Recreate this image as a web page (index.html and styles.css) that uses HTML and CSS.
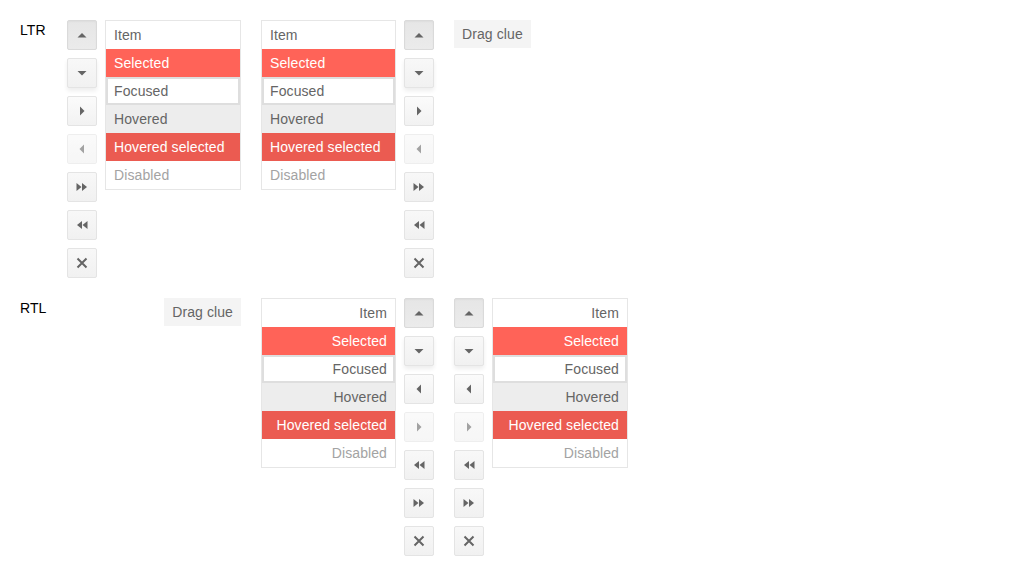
FILE: index.html
```html
<!DOCTYPE html>
<html>
<head>
<meta charset="utf-8">
<link rel="stylesheet" href="styles.css">
</head>
<body>
<div class="demo">
  <div class="label">LTR</div>

  <div class="listbox">
    <div class="toolbar">
      <button class="btn active"><svg viewBox="0 0 16 16" width="16" height="16"><polygon points="3.5,10.5 8,6 12.5,10.5"/></svg></button>
      <button class="btn focus"><svg viewBox="0 0 16 16" width="16" height="16"><polygon points="3.5,6 8,10.5 12.5,6"/></svg></button>
      <button class="btn hover"><svg viewBox="0 0 16 16" width="16" height="16"><polygon points="6,3.5 10.5,8 6,12.5"/></svg></button>
      <button class="btn disabled"><svg viewBox="0 0 16 16" width="16" height="16"><polygon points="10,3.5 5.5,8 10,12.5"/></svg></button>
      <button class="btn"><svg viewBox="0 0 16 16" width="16" height="16"><polygon points="2.5,4 7.5,8 2.5,12"/><polygon points="8,4 13,8 8,12"/></svg></button>
      <button class="btn"><svg viewBox="0 0 16 16" width="16" height="16"><polygon points="13.5,4 8.5,8 13.5,12"/><polygon points="8,4 3,8 8,12"/></svg></button>
      <button class="btn"><svg viewBox="0 0 16 16" width="16" height="16"><path d="M3.5 3.5 L12.5 12.5 M12.5 3.5 L3.5 12.5" class="x"/></svg></button>
    </div>
    <ul class="list">
      <li class="item">Item</li>
      <li class="item selected">Selected</li>
      <li class="item focused">Focused</li>
      <li class="item hovered">Hovered</li>
      <li class="item hovered-selected">Hovered selected</li>
      <li class="item disabled">Disabled</li>
    </ul>
  </div>

  <div class="listbox">
    <ul class="list narrow">
      <li class="item">Item</li>
      <li class="item selected">Selected</li>
      <li class="item focused">Focused</li>
      <li class="item hovered">Hovered</li>
      <li class="item hovered-selected">Hovered selected</li>
      <li class="item disabled">Disabled</li>
    </ul>
    <div class="toolbar">
      <button class="btn active"><svg viewBox="0 0 16 16" width="16" height="16"><polygon points="3.5,10.5 8,6 12.5,10.5"/></svg></button>
      <button class="btn focus"><svg viewBox="0 0 16 16" width="16" height="16"><polygon points="3.5,6 8,10.5 12.5,6"/></svg></button>
      <button class="btn hover"><svg viewBox="0 0 16 16" width="16" height="16"><polygon points="6,3.5 10.5,8 6,12.5"/></svg></button>
      <button class="btn disabled"><svg viewBox="0 0 16 16" width="16" height="16"><polygon points="10,3.5 5.5,8 10,12.5"/></svg></button>
      <button class="btn"><svg viewBox="0 0 16 16" width="16" height="16"><polygon points="2.5,4 7.5,8 2.5,12"/><polygon points="8,4 13,8 8,12"/></svg></button>
      <button class="btn"><svg viewBox="0 0 16 16" width="16" height="16"><polygon points="13.5,4 8.5,8 13.5,12"/><polygon points="8,4 3,8 8,12"/></svg></button>
      <button class="btn"><svg viewBox="0 0 16 16" width="16" height="16"><path d="M3.5 3.5 L12.5 12.5 M12.5 3.5 L3.5 12.5" class="x"/></svg></button>
    </div>
  </div>

  <div class="cell-start">
    <div class="drag-clue">Drag clue</div>
  </div>

  <div class="label">RTL</div>

  <div class="cell-end">
    <div class="drag-clue">Drag clue</div>
  </div>

  <div class="listbox" dir="rtl">
    <div class="toolbar">
      <button class="btn active"><svg viewBox="0 0 16 16" width="16" height="16"><polygon points="3.5,10.5 8,6 12.5,10.5"/></svg></button>
      <button class="btn focus"><svg viewBox="0 0 16 16" width="16" height="16"><polygon points="3.5,6 8,10.5 12.5,6"/></svg></button>
      <button class="btn hover"><svg viewBox="0 0 16 16" width="16" height="16"><polygon points="10,3.5 5.5,8 10,12.5"/></svg></button>
      <button class="btn disabled"><svg viewBox="0 0 16 16" width="16" height="16"><polygon points="6,3.5 10.5,8 6,12.5"/></svg></button>
      <button class="btn"><svg viewBox="0 0 16 16" width="16" height="16"><polygon points="13.5,4 8.5,8 13.5,12"/><polygon points="8,4 3,8 8,12"/></svg></button>
      <button class="btn"><svg viewBox="0 0 16 16" width="16" height="16"><polygon points="2.5,4 7.5,8 2.5,12"/><polygon points="8,4 13,8 8,12"/></svg></button>
      <button class="btn"><svg viewBox="0 0 16 16" width="16" height="16"><path d="M3.5 3.5 L12.5 12.5 M12.5 3.5 L3.5 12.5" class="x"/></svg></button>
    </div>
    <ul class="list narrow">
      <li class="item">Item</li>
      <li class="item selected">Selected</li>
      <li class="item focused">Focused</li>
      <li class="item hovered">Hovered</li>
      <li class="item hovered-selected">Hovered selected</li>
      <li class="item disabled">Disabled</li>
    </ul>
  </div>

  <div class="listbox" dir="rtl">
    <ul class="list">
      <li class="item">Item</li>
      <li class="item selected">Selected</li>
      <li class="item focused">Focused</li>
      <li class="item hovered">Hovered</li>
      <li class="item hovered-selected">Hovered selected</li>
      <li class="item disabled">Disabled</li>
    </ul>
    <div class="toolbar">
      <button class="btn active"><svg viewBox="0 0 16 16" width="16" height="16"><polygon points="3.5,10.5 8,6 12.5,10.5"/></svg></button>
      <button class="btn focus"><svg viewBox="0 0 16 16" width="16" height="16"><polygon points="3.5,6 8,10.5 12.5,6"/></svg></button>
      <button class="btn hover"><svg viewBox="0 0 16 16" width="16" height="16"><polygon points="10,3.5 5.5,8 10,12.5"/></svg></button>
      <button class="btn disabled"><svg viewBox="0 0 16 16" width="16" height="16"><polygon points="6,3.5 10.5,8 6,12.5"/></svg></button>
      <button class="btn"><svg viewBox="0 0 16 16" width="16" height="16"><polygon points="13.5,4 8.5,8 13.5,12"/><polygon points="8,4 3,8 8,12"/></svg></button>
      <button class="btn"><svg viewBox="0 0 16 16" width="16" height="16"><polygon points="2.5,4 7.5,8 2.5,12"/><polygon points="8,4 13,8 8,12"/></svg></button>
      <button class="btn"><svg viewBox="0 0 16 16" width="16" height="16"><path d="M3.5 3.5 L12.5 12.5 M12.5 3.5 L3.5 12.5" class="x"/></svg></button>
    </div>
  </div>
</div>
</body>
</html>
```
FILE: styles.css
```css
html, body {
  margin: 0;
  padding: 0;
  background: #ffffff;
}
body {
  padding: 20px;
  font-family: "Liberation Sans", Arial, sans-serif;
  font-size: 14px;
  line-height: 20px;
  letter-spacing: 0.1px;
  color: #656565;
}
.demo {
  display: grid;
  grid-template-columns: 27px 174px 173px auto;
  column-gap: 20px;
  row-gap: 20px;
  align-items: start;
}
.label {
  color: #000000;
  line-height: 28px;
  margin-top: -4px;
}
.listbox {
  display: flex;
  gap: 8px;
  align-items: flex-start;
  justify-self: start;
}
.toolbar {
  display: flex;
  flex-direction: column;
  gap: 8px;
}
.btn {
  width: 30px;
  height: 30px;
  box-sizing: border-box;
  padding: 0;
  margin: 0;
  border: 1px solid #e4e4e4;
  border-radius: 2px;
  background-color: #f6f6f6;
  background-image: linear-gradient(#f8f8f8, #f1f1f1);
  color: #656565;
  display: flex;
  align-items: center;
  justify-content: center;
}
.btn svg {
  width: 16px;
  height: 16px;
  flex-shrink: 0;
  fill: currentColor;
}
.btn .x {
  fill: none;
  stroke: currentColor;
  stroke-width: 2;
}
.btn.active {
  background-color: #e8e8e8;
  background-image: linear-gradient(#e6e6e6, #ebebeb);
  border-color: #dadada;
  box-shadow: inset 0 1px 2px rgba(0, 0, 0, 0.04);
}
.btn.focus {
  box-shadow: 0 3px 4px 0 rgba(0, 0, 0, 0.07);
}
.btn.hover {
  background-image: linear-gradient(#fbfbfb, #f2f2f2);
}
.btn.disabled {
  opacity: 0.6;
}
.list {
  list-style: none;
  margin: 0;
  padding: 0;
  width: 136px;
  box-sizing: border-box;
  border: 1px solid #e6e6e6;
  background: #ffffff;
}
.list.narrow {
  width: 135px;
}
.item {
  padding: 4px 8px;
  line-height: 20px;
  white-space: nowrap;
  color: #656565;
}
.item.selected {
  background: #ff6358;
  color: #ffffff;
}
.item.focused {
  box-shadow: inset 0 0 0 2px #dedede;
}
.item.hovered {
  background: #ededed;
}
.item.hovered-selected {
  background: #eb5b51;
  color: #ffffff;
}
.item.disabled {
  color: #a3a3a3;
}
.cell-start {
  justify-self: start;
}
.cell-end {
  justify-self: end;
}
.drag-clue {
  background: #f4f4f4;
  color: #656565;
  padding: 4px 8px;
  line-height: 20px;
  white-space: nowrap;
}
```
